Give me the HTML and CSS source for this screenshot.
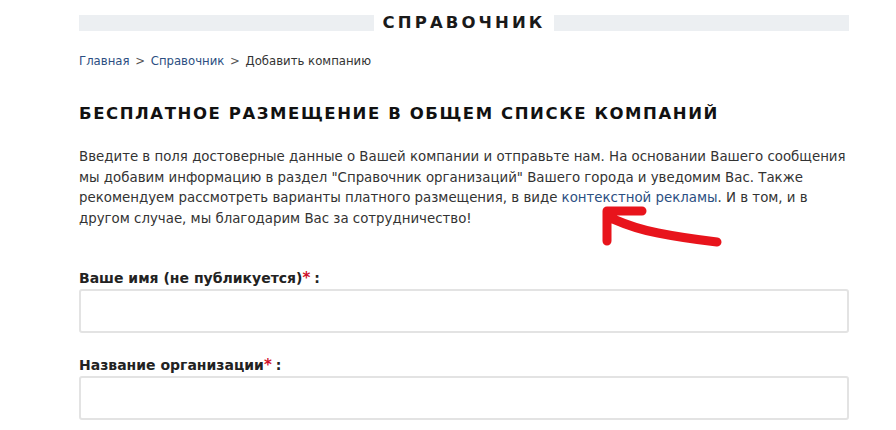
FILE: index.html
```html
<!DOCTYPE html>
<html lang="ru">
<head>
    <meta charset="UTF-8">
    <title>Добавить компанию</title>
    <link rel="stylesheet" href="styles.css">
</head>
<body>
    <div class="page">
        <div class="section-title">
            <span class="line"></span>
            <h2>Справочник</h2>
            <span class="line"></span>
        </div>

        <div class="breadcrumbs">
            <a href="#">Главная</a>
            <span class="sep">&gt;</span>
            <a href="#">Справочник</a>
            <span class="sep">&gt;</span>
            <span>Добавить компанию</span>
        </div>

        <h1>Бесплатное размещение в общем списке компаний</h1>

        <div class="intro">
            <p>Введите в поля достоверные данные о Вашей компании и отправьте нам. На основании Вашего сообщения
            мы добавим информацию в раздел "Справочник организаций" Вашего города и уведомим Вас. Также
            рекомендуем рассмотреть варианты платного размещения, в виде <a href="#">контекстной рекламы</a>. И в том, и в
            другом случае, мы благодарим Вас за сотрудничество!</p>
            <!-- пометка красным маркером -->
            <svg class="mark" width="130" height="44" viewBox="0 0 130 44">
                <path d="M9 35 L9 5 L44 5 M15 13 Q38 23 60 27 Q85 32 119 36" fill="none" stroke="#e8141c" stroke-width="9" stroke-linecap="round" stroke-linejoin="round"/>
            </svg>
        </div>

        <form class="company-form">
            <label for="name">Ваше имя (не публикуется)<span class="req">*</span>:</label>
            <input type="text" id="name">

            <label for="org">Название организации<span class="req">*</span>:</label>
            <input type="text" id="org">
        </form>
    </div>
</body>
</html>
```

FILE: styles.css
```css
body {
    font-family: 'DejaVu Sans', Verdana, sans-serif;
    background-color: #fff;
    color: #333;
    margin: 0;
}

.page {
    width: 770px;
    padding: 15px 0 0 79px;
}

.section-title {
    display: flex;
    align-items: center;
    gap: 9px;
}

.section-title .line {
    flex: 1;
    height: 16px;
    background-color: #eceff2;
}

.section-title h2 {
    margin: 0;
    font-size: 16.5px;
    line-height: 16px;
    letter-spacing: 3.1px;
    text-transform: uppercase;
    color: #1a1a1a;
}

.breadcrumbs {
    margin-top: 22px;
    font-size: 11.7px;
    line-height: 16px;
    color: #333;
}

.breadcrumbs a {
    color: #2c4f82;
    text-decoration: none;
}

.breadcrumbs .sep {
    color: #555;
    margin: 0 2px;
}

h1 {
    margin: 35px 0 0;
    font-size: 16.5px;
    line-height: 20px;
    letter-spacing: 1.58px;
    text-transform: uppercase;
    color: #111;
}

.intro {
    position: relative;
    margin-top: 23px;
}

.intro p {
    margin: 0;
    font-size: 13.35px;
    line-height: 20.5px;
}

.intro a {
    color: #2c4f82;
    text-decoration: none;
}

.mark {
    position: absolute;
    left: 519px;
    top: 59px;
}

.company-form {
    margin-top: 41px;
}

.company-form label {
    display: block;
    font-size: 14px;
    line-height: 16px;
    font-weight: bold;
    color: #222;
    margin-bottom: 3px;
}

.company-form .req {
    color: #d0102a;
    font-size: 15px;
    margin-right: 4px;
}

.company-form input {
    display: block;
    box-sizing: border-box;
    width: 770px;
    height: 44px;
    border: 2px solid #e3e3e3;
    border-radius: 3px;
    margin-bottom: 24px;
}
```
